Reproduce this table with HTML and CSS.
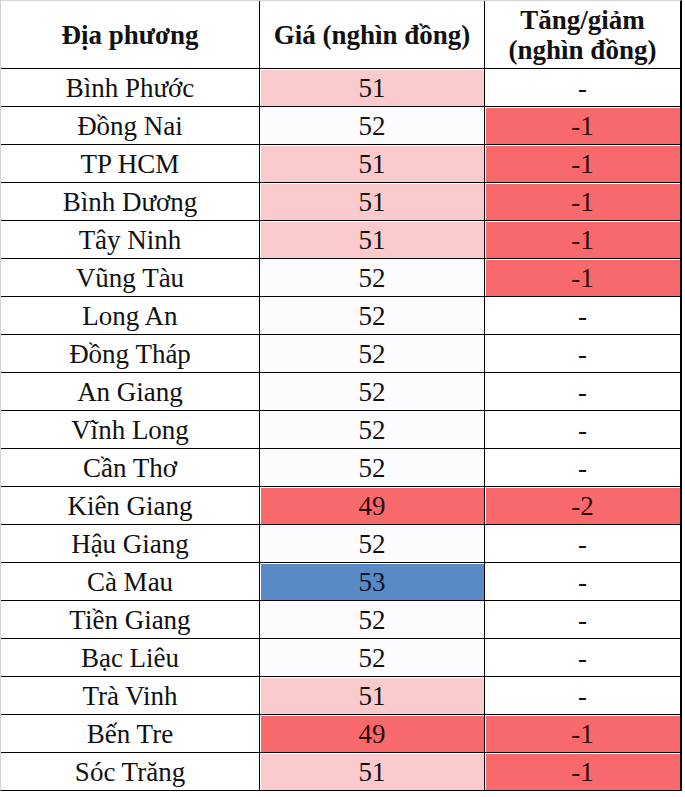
FILE: index.html
```html
<!DOCTYPE html>
<html>
<head>
<meta charset="utf-8">
<title>Bang gia</title>
<link rel="stylesheet" href="styles.css">
</head>
<body>
<div class="sheet">
  <div class="cell head">Địa phương</div>
  <div class="cell head">Giá (nghìn đồng)</div>
  <div class="cell head"><span>Tăng/giảm</span><span>(nghìn đồng)</span></div>

  <div class="cell">Bình Phước</div><div class="cell pink">51</div><div class="cell">-</div>
  <div class="cell">Đồng Nai</div><div class="cell mid">52</div><div class="cell red">-1</div>
  <div class="cell">TP HCM</div><div class="cell pink">51</div><div class="cell red">-1</div>
  <div class="cell">Bình Dương</div><div class="cell pink">51</div><div class="cell red">-1</div>
  <div class="cell">Tây Ninh</div><div class="cell pink">51</div><div class="cell red">-1</div>
  <div class="cell">Vũng Tàu</div><div class="cell mid">52</div><div class="cell red">-1</div>
  <div class="cell">Long An</div><div class="cell mid">52</div><div class="cell">-</div>
  <div class="cell">Đồng Tháp</div><div class="cell mid">52</div><div class="cell">-</div>
  <div class="cell">An Giang</div><div class="cell mid">52</div><div class="cell">-</div>
  <div class="cell">Vĩnh Long</div><div class="cell mid">52</div><div class="cell">-</div>
  <div class="cell">Cần Thơ</div><div class="cell mid">52</div><div class="cell">-</div>
  <div class="cell">Kiên Giang</div><div class="cell red">49</div><div class="cell red">-2</div>
  <div class="cell">Hậu Giang</div><div class="cell mid">52</div><div class="cell">-</div>
  <div class="cell">Cà Mau</div><div class="cell blue">53</div><div class="cell">-</div>
  <div class="cell">Tiền Giang</div><div class="cell mid">52</div><div class="cell">-</div>
  <div class="cell">Bạc Liêu</div><div class="cell mid">52</div><div class="cell">-</div>
  <div class="cell">Trà Vinh</div><div class="cell pink">51</div><div class="cell">-</div>
  <div class="cell">Bến Tre</div><div class="cell red">49</div><div class="cell red">-1</div>
  <div class="cell">Sóc Trăng</div><div class="cell pink">51</div><div class="cell red">-1</div>
</div>
</body>
</html>
```

FILE: styles.css
```css
html, body {
  margin: 0;
  padding: 0;
  background: #ffffff;
}

body {
  font-family: "Liberation Serif", serif;
  font-size: 27px;
}

.sheet {
  display: grid;
  grid-template-columns: 258px 224px 195px;
  grid-template-rows: 67px repeat(19, 37px);
  gap: 1px;
  width: 679px;
  background: #000000;
  border-left: 1px solid #d4d4d4;
  border-top: 1px solid #d4d4d4;
  border-right: 2px solid #000000;
  border-bottom: 1px solid #000000;
}

.cell {
  background: #ffffff;
  display: flex;
  flex-direction: column;
  align-items: center;
  justify-content: center;
  line-height: 30px;
  white-space: nowrap;
  font-family: "Liberation Serif", serif;
  font-size: 27px;
  color: #111111;
}

.head {
  font-weight: bold;
}

.pink {
  background: #fbcacd;
  box-shadow: inset 1px 1px 0 #ffffff;
}

.mid {
  background: #fcfcff;
}

.red {
  background: #f8696b;
  box-shadow: inset 1px 1px 0 #ffffff;
  color: #2a0a0a;
}

.blue {
  background: #5a8ac6;
  box-shadow: inset 1px 1px 0 #ffffff;
  color: #0a1530;
}
```
